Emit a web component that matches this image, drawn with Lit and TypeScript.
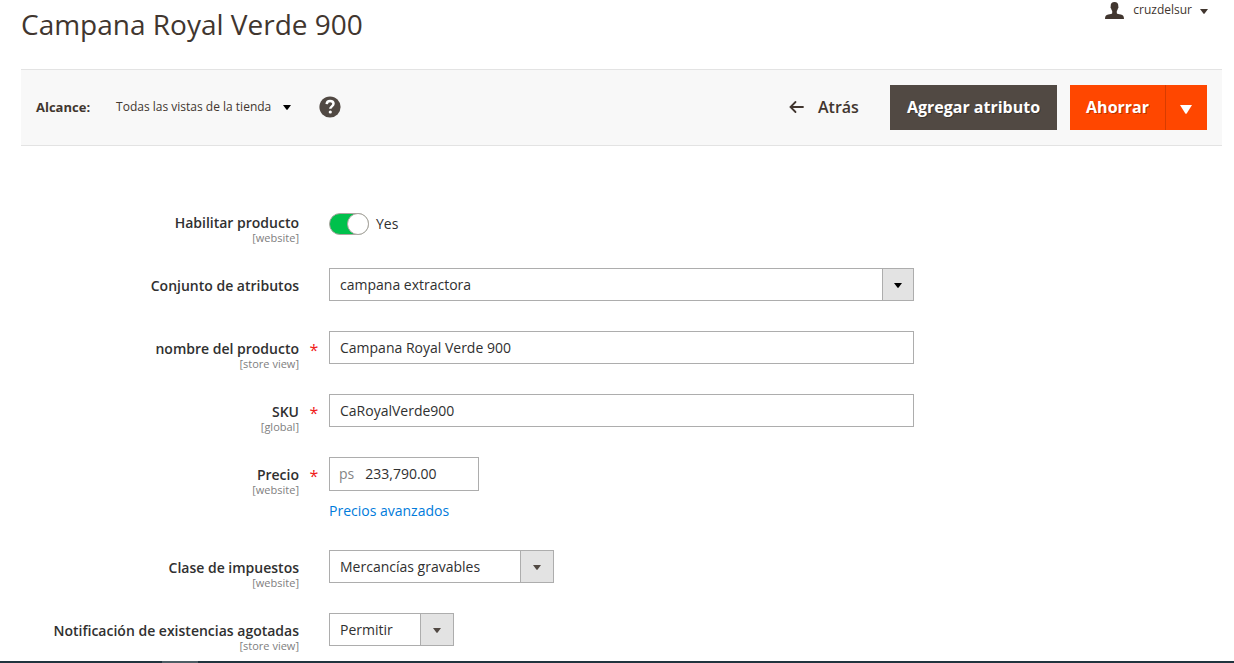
import { LitElement, html, css, nothing, type TemplateResult } from "lit";
import { customElement, property, state } from "lit/decorators.js";

const caret = html`<svg class="caret" viewBox="0 0 8 5" width="8" height="5" aria-hidden="true">
  <path d="M0 0h8L4.6 4.6a.8.8 0 0 1-1.2 0z" fill="currentColor" />
</svg>`;

@customElement("page-header")
class PageHeader extends LitElement {
  @property() heading = "";
  @property() user = "";

  static styles = css`
    :host {
      display: flex;
      justify-content: space-between;
      align-items: flex-start;
      padding: 0 14px 0 0;
    }
    .title {
      margin: 0;
      padding-top: 5px;
      font-size: 28px;
      line-height: 38px;
      font-weight: 400;
      color: #41362f;
    }
    .user {
      display: flex;
      align-items: center;
      margin: 0;
      padding: 0;
      border: 0;
      background: none;
      font: inherit;
      font-size: 12px;
      line-height: 20px;
      color: #41362f;
      cursor: pointer;
    }
    .avatar {
      margin-right: 9px;
    }
    .caret {
      margin: 2px 0 0 8px;
    }
  `;

  render() {
    return html`
      <h1 class="title">${this.heading}</h1>
      <button class="user" type="button">
        <svg class="avatar" viewBox="0 0 19 17" width="19" height="17" aria-hidden="true">
          <path
            d="M9.500 0C7 0 5.600 1.500 5.700 3.900c0 .4 0 .7-.1.9-.3.5.1 1.600.5 1.800.2 1 .7 1.900 1.100 2.500v2.200C7 12 5.200 12.200 3.200 12.600 1 13.100.1 14 0 17h19c-.1-3-1-3.900-3.200-4.400-2-.4-3.800-.6-4-1.300V9.100c.4-.6.900-1.500 1.100-2.500.4-.2.8-1.300.5-1.800-.1-.2-.1-.5-.1-.9C13.400 1.500 12 0 9.500 0z"
            fill="#41362f"
          />
        </svg>
        ${this.user} ${caret}
      </button>
    `;
  }
}

@customElement("page-toolbar")
class PageToolbar extends LitElement {
  static styles = css`
    :host {
      display: flex;
      justify-content: space-between;
      align-items: center;
      padding: 15px;
      border: solid #e3e3e3;
      border-width: 1px 0;
      background: #f8f8f8;
      color: #41362f;
    }
    button {
      margin: 0;
      border: 0;
      border-radius: 0;
      background: none;
      font: inherit;
      color: inherit;
      cursor: pointer;
    }
    .scope,
    .actions {
      display: flex;
      align-items: center;
    }
    .scope {
      padding-bottom: 2px;
    }
    .scope-label {
      font-size: 13px;
      line-height: 20px;
      font-weight: 700;
    }
    .scope-button {
      display: flex;
      align-items: center;
      gap: 12px;
      margin: 0 28px 0 26px;
      padding: 0;
      font-size: 12px;
      line-height: 20px;
    }
    .scope-button .caret {
      color: #000;
      margin-top: 2px;
    }
    .help {
      display: flex;
      padding: 0;
    }
    .back,
    .secondary,
    .primary {
      height: 45px;
      padding: 0 0 2px;
      font-size: 16px;
      line-height: 22px;
      font-weight: 600;
    }
    .back {
      display: flex;
      align-items: center;
      gap: 14px;
      margin-right: 31px;
    }
    .secondary,
    .primary {
      padding: 0 16px 2px;
      font-weight: 700;
      color: #fff;
      text-shadow: 1px 1px 0 rgba(0, 0, 0, 0.3);
    }
    .secondary {
      padding: 0 17px 2px;
      background: #514943;
    }
    .split {
      display: flex;
      margin-left: 13px;
      background: #ff4700;
    }
    .toggle {
      display: flex;
      align-items: center;
      justify-content: center;
      width: 42px;
      padding: 3px 2px 0 0;
      border-left: 1px solid #d83c00;
      color: #fff;
    }
  `;

  render() {
    return html`
      <div class="scope">
        <span class="scope-label">Alcance:</span>
        <button class="scope-button" type="button">Todas las vistas de la tienda ${caret}</button>
        <button class="help" type="button" aria-label="Ayuda">
          <svg viewBox="0 0 22 22" width="22" height="22" aria-hidden="true">
            <circle cx="11" cy="11" r="10.6" fill="#514943" />
            <path
              d="M7.700 8.100C7.800 5.900 9.200 4.900 11.100 4.900c2 0 3.400 1.100 3.400 2.900 0 2.500-3.200 2.600-3.200 5"
              fill="none"
              stroke="#fff"
              stroke-width="2.500"
            />
            <circle cx="11.300" cy="16" r="1.600" fill="#fff" />
          </svg>
        </button>
      </div>
      <div class="actions">
        <button class="back" type="button">
          <svg viewBox="0 0 15 14" width="15" height="14" aria-hidden="true">
            <path d="M6.500 2 1.500 7 6.500 12M1.500 7H14" fill="none" stroke="#41362f" stroke-width="1.800" stroke-linecap="round" />
          </svg>
          Atrás
        </button>
        <button class="secondary" type="button">Agregar atributo</button>
        <div class="split">
          <button class="primary" type="button">Ahorrar</button>
          <button class="toggle" type="button" aria-label="Más opciones">
            <svg viewBox="0 0 12 9" width="12" height="9" aria-hidden="true">
              <path d="M0 0h12L6.700 8.400a.9.9 0 0 1-1.400 0z" fill="#fff" />
            </svg>
          </button>
        </div>
      </div>
    `;
  }
}

@customElement("product-form")
class ProductForm extends LitElement {
  @state() private enabled = true;

  static styles = css`
    :host {
      display: block;
    }
    .form {
      display: flex;
      flex-direction: column;
      gap: 24px;
      font-size: 14px;
      color: #303030;
    }
    .row {
      display: grid;
      grid-template-columns: 278fr 30px 585fr 308fr;
      align-items: start;
      min-height: 39px;
    }
    .caption {
      display: flex;
      flex-direction: column;
      padding-top: 8px;
      text-align: right;
    }
    .name {
      font-weight: 600;
      line-height: 19px;
      white-space: nowrap;
      align-self: flex-end;
    }
    .tag {
      font-size: 11px;
      line-height: 12px;
      color: #808080;
    }
    .star {
      padding-top: 10px;
      text-align: center;
      font-size: 16px;
      line-height: 19px;
      color: #f01818;
    }
    .control {
      grid-column: 3;
    }
    input,
    select {
      box-sizing: border-box;
      margin: 0;
      border-radius: 0;
      font: inherit;
      color: inherit;
    }
    .text,
    .choice {
      display: block;
      width: 100%;
      height: 33px;
      padding: 0 10px;
      border: 1px solid #adadad;
      background: #fff;
    }
    .picker {
      position: relative;
    }
    .medium {
      width: 225px;
    }
    .small {
      width: 125px;
    }
    .choice {
      appearance: none;
      padding-right: 40px;
    }
    .arrow {
      position: absolute;
      inset: 0 0 0 auto;
      display: flex;
      align-items: center;
      justify-content: center;
      box-sizing: border-box;
      width: 34px;
      padding-top: 2px;
      border: 1px solid #adadad;
      background: #e3e3e3;
      color: #514943;
      pointer-events: none;
    }
    .wide .arrow {
      width: 32px;
      color: #000;
    }
    .switch-line {
      display: flex;
      align-items: center;
      gap: 7px;
      padding-top: 8px;
      line-height: 22px;
    }
    .switch {
      appearance: none;
      display: flex;
      width: 40px;
      height: 22px;
      border: 1px solid #aaa6a0;
      border-radius: 11px;
      background: #e3e3e3;
      cursor: pointer;
    }
    .switch::before {
      content: "";
      box-sizing: border-box;
      width: 22px;
      height: 22px;
      margin: -1px;
      border: 1px solid #aaa6a0;
      border-radius: 50%;
      background: #fff;
    }
    .switch:checked {
      justify-content: flex-end;
      background: #00c14c;
    }
    .price {
      display: flex;
      align-items: center;
      gap: 11px;
      box-sizing: border-box;
      width: 150px;
      height: 34px;
      padding: 0 9px 2px;
      border: 1px solid #adadad;
    }
    .currency {
      color: #858585;
    }
    .amount {
      flex: 1;
      min-width: 0;
      padding: 0;
      border: 0;
      background: none;
      outline: 0;
    }
    .link {
      display: block;
      width: max-content;
      margin-top: 10px;
      line-height: 20px;
      padding-bottom: 5px;
      color: #007bdb;
      text-decoration: none;
    }
  `;

  private row(id: string, name: string, tag: string, required: boolean, control: TemplateResult) {
    return html`
      <div class="row">
        <label class="caption" for=${id}>
          <span class="name">${name}</span>
          ${tag ? html`<span class="tag">[${tag}]</span>` : nothing}
        </label>
        ${required ? html`<span class="star" aria-hidden="true">*</span>` : nothing}
        <div class="control">${control}</div>
      </div>
    `;
  }

  private picker(id: string, size: string, value: string) {
    return html`
      <div class="picker ${size}">
        <select class="choice" id=${id}>
          <option>${value}</option>
        </select>
        <span class="arrow">${caret}</span>
      </div>
    `;
  }

  render() {
    return html`
      <form class="form">
        ${this.row(
          "enabled",
          "Habilitar producto",
          "website",
          false,
          html`<div class="switch-line">
            <input
              class="switch"
              id="enabled"
              type="checkbox"
              .checked=${this.enabled}
              @change=${(e: Event) => (this.enabled = (e.target as HTMLInputElement).checked)}
            />
            <span>${this.enabled ? "Yes" : "No"}</span>
          </div>`
        )}
        ${this.row("set", "Conjunto de atributos", "", false, this.picker("set", "wide", "campana extractora"))}
        ${this.row(
          "name",
          "nombre del producto",
          "store view",
          true,
          html`<input class="text" id="name" type="text" required .value=${"Campana Royal Verde 900"} />`
        )}
        ${this.row(
          "sku",
          "SKU",
          "global",
          true,
          html`<input class="text" id="sku" type="text" required .value=${"CaRoyalVerde900"} />`
        )}
        ${this.row(
          "price",
          "Precio",
          "website",
          true,
          html`<div class="price">
              <span class="currency">ps</span>
              <input class="amount" id="price" type="text" required .value=${"233,790.00"} />
            </div>
            <a class="link" href="#advanced">Precios avanzados</a>`
        )}
        ${this.row("tax", "Clase de impuestos", "website", false, this.picker("tax", "medium", "Mercancías gravables"))}
        ${this.row(
          "stock",
          "Notificación de existencias agotadas",
          "store view",
          false,
          this.picker("stock", "small", "Permitir")
        )}
      </form>
    `;
  }
}

@customElement("app-root")
class AppRoot extends LitElement {
  static styles = css`
    :host {
      display: flex;
      flex-direction: column;
      min-height: 100vh;
      background: #fff;
      font-family: "Open Sans", "Noto Sans", sans-serif;
    }
    .page {
      display: flex;
      flex-direction: column;
      padding: 0 12px 0 21px;
    }
    .toolbar {
      margin-top: 26px;
    }
    .fields {
      margin-top: 59px;
    }
    .strip {
      height: 2px;
      margin-top: auto;
      padding-left: 162px;
      background: #20343e;
    }
    .strip-item {
      width: 36px;
      height: 2px;
      background: #4d5d65;
    }
  `;

  render() {
    return html`
      <main class="page">
        <page-header heading="Campana Royal Verde 900" user="cruzdelsur"></page-header>
        <page-toolbar class="toolbar"></page-toolbar>
        <product-form class="fields"></product-form>
      </main>
      <div class="strip"><div class="strip-item"></div></div>
    `;
  }
}
